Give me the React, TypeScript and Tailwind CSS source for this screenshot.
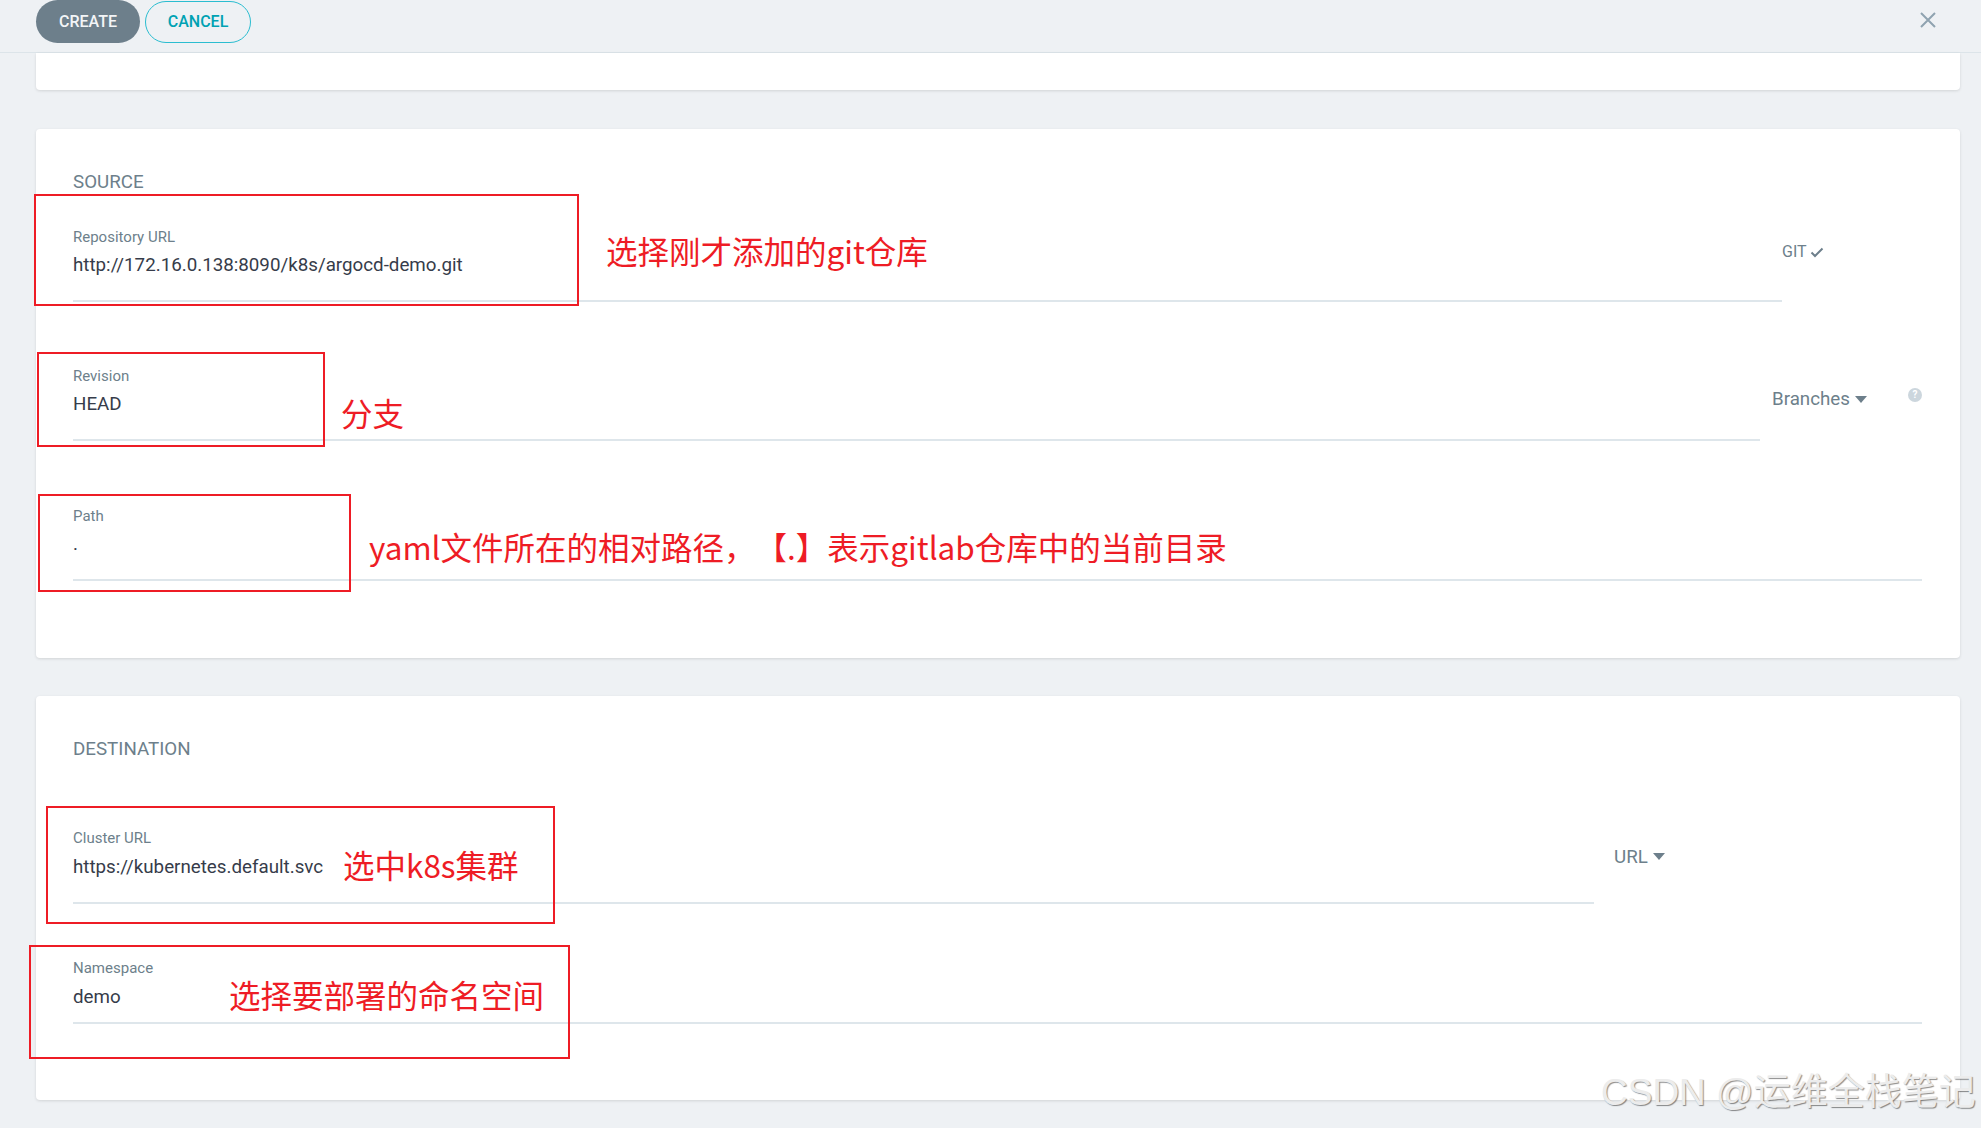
import React from "react";

const UI = "font-['Roboto','Liberation_Sans',sans-serif]";
const CJK = "font-['Noto_Sans_CJK_SC','Noto_Sans',sans-serif]";

function Caret() {
  return (
    <svg width="12" height="7" viewBox="0 0 12 7" className="shrink-0">
      <polygon points="0,0 12,0 6,7" fill="#6d7f8b" />
    </svg>
  );
}

function Field({
  label,
  value,
  gap = "mt-[8.5px]",
  pb = "pb-[24px]",
}: {
  label: string;
  value: string;
  gap?: string;
  pb?: string;
}) {
  return (
    <div className={`flex-1 border-b-2 border-[#dee6eb] ${pb}`}>
      <div className="text-[15px] leading-[18px] text-[#6d7f8b]">{label}</div>
      <div className={`${gap} text-[18.75px] leading-[22px] text-[#363c4a]`}>{value}</div>
    </div>
  );
}

function Note({ text, cls }: { text: string; cls: string }) {
  return (
    <div
      className={`absolute ${CJK} text-[31.5px] leading-[31px] whitespace-nowrap text-[#ee1c25] [text-spacing-trim:space-all] ${cls}`}
    >
      {text}
    </div>
  );
}

function Box({ cls }: { cls: string }) {
  return <div className={`absolute border-2 border-[#ee1c25] ${cls}`} />;
}

export default function App() {
  return (
    <div className={`relative w-[1981px] h-[1128px] overflow-hidden bg-[#eef1f4] ${UI}`}>
      {/* header */}
      <div className="flex h-[53px] items-start border-b border-[#dce4e9] pl-[36px] pr-[45px]">
        <button className="h-[43px] w-[104px] rounded-full bg-[#6d7f8b] text-[16px] font-medium text-[#f3f5f7]">
          CREATE
        </button>
        <button className="ml-[5px] mt-[1px] h-[42px] w-[106px] rounded-full border-[1.5px] border-[#2bbdd0] text-[16px] font-medium text-[#00a2b3]">
          CANCEL
        </button>
        <svg width="16" height="16" viewBox="0 0 16 16" className="ml-auto mt-[12px]">
          <path d="M1 1 L15 15 M15 1 L1 15" stroke="#8fa3b0" strokeWidth="2" />
        </svg>
      </div>

      <div className="pl-[36px] pr-[21px]">
        {/* card 1 (tail) */}
        <div className="h-[37px] rounded-b-[4px] bg-white shadow-[0_1px_3px_rgba(0,0,0,0.12)]" />

        {/* SOURCE */}
        <div className="mt-[39px] h-[529px] rounded-[4px] bg-white pl-[37px] pr-[38px] pt-[42px] shadow-[0_1px_3px_rgba(0,0,0,0.12)]">
          <div className="text-[18.75px] leading-[22px] text-[#6d7f8b]">SOURCE</div>

          <div className="mt-[34.6px] flex items-start">
            <Field label="Repository URL" value="http://172.16.0.138:8090/k8s/argocd-demo.git" />
            <div className="flex w-[140px] items-center gap-[3px] pt-[15.5px] text-[16px] leading-[18px] text-[#6d7f8b]">
              <span>GIT</span>
              <svg width="14" height="11" viewBox="0 0 14 11">
                <polyline points="1.5,5.5 5,9 12.5,1.5" fill="none" stroke="#6d7f8b" strokeWidth="2" />
              </svg>
            </div>
          </div>

          <div className="mt-[64.6px] flex items-start">
            <Field label="Revision" value="HEAD" />
            <div className="flex w-[162px] items-start pl-[12px]">
              <div className="mt-[21.4px] flex items-center gap-[5px] text-[18.75px] leading-[22px] text-[#6d7f8b]">
                <span>Branches</span>
                <Caret />
              </div>
              <div className="ml-auto mt-[21.5px] flex h-[14px] w-[14px] items-center justify-center rounded-full bg-[#ccd6dd] text-[10px] font-bold leading-none text-white">
                ?
              </div>
            </div>
          </div>

          <div className="mt-[65.6px] flex items-start">
            <Field label="Path" value="." />
          </div>
        </div>

        {/* DESTINATION */}
        <div className="mt-[38px] h-[404px] rounded-[4px] bg-white pl-[37px] pr-[38px] pt-[42px] shadow-[0_1px_3px_rgba(0,0,0,0.12)]">
          <div className="text-[18.75px] leading-[22px] text-[#6d7f8b]">DESTINATION</div>

          <div className="mt-[68.6px] flex items-start">
            <Field label="Cluster URL" value="https://kubernetes.default.svc" gap="mt-[9.4px]" />
            <div className="w-[328px] pl-[20px]">
              <div className="mt-[17.4px] flex items-center gap-[5px] text-[18.75px] leading-[22px] text-[#6d7f8b]">
                <span>URL</span>
                <Caret />
              </div>
            </div>
          </div>

          <div className="mt-[54.6px] flex items-start">
            <Field label="Namespace" value="demo" gap="mt-[9.4px]" pb="pb-[14px]" />
          </div>
        </div>
      </div>

      {/* annotations */}
      <Box cls="left-[34px] top-[194px] w-[545px] h-[112px]" />
      <Box cls="left-[37px] top-[352px] w-[288px] h-[95px]" />
      <Box cls="left-[38px] top-[494px] w-[313px] h-[98px]" />
      <Box cls="left-[46px] top-[806px] w-[509px] h-[118px]" />
      <Box cls="left-[29px] top-[945px] w-[541px] h-[114px]" />

      <Note text="选择刚才添加的git仓库" cls="left-[606px] top-[235px]" />
      <Note text="分支" cls="left-[341px] top-[397px]" />
      <Note text="yaml文件所在的相对路径，【.】表示gitlab仓库中的当前目录" cls="left-[369px] top-[531px]" />
      <Note text="选中k8s集群" cls="left-[343px] top-[849px]" />
      <Note text="选择要部署的命名空间" cls="left-[229px] top-[979px]" />

      {/* watermark */}
      <div className="absolute left-[1601px] top-[1073px] whitespace-nowrap font-['Liberation_Sans','Noto_Sans_CJK_SC',sans-serif] text-[37px] leading-[40px] text-[#ececec] [text-shadow:1px_1px_1px_rgba(0,0,0,0.45)]">
        CSDN @运维全栈笔记
      </div>
    </div>
  );
}
